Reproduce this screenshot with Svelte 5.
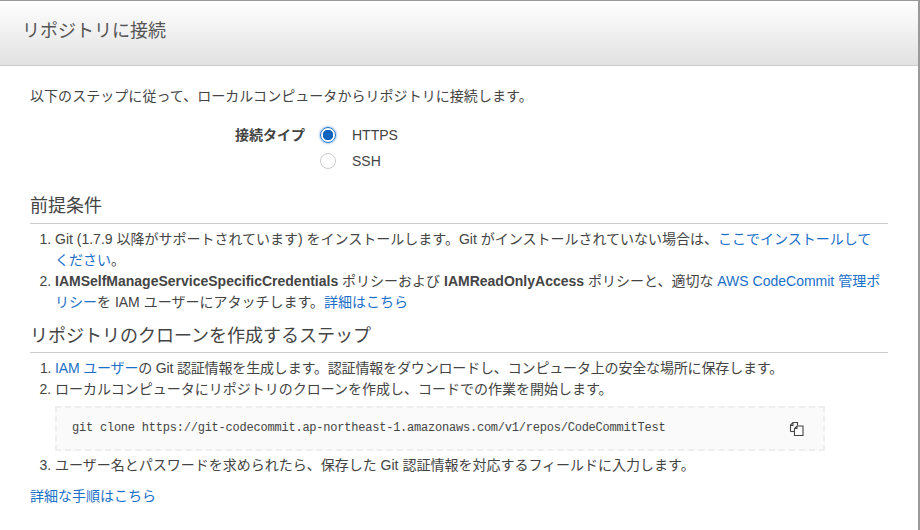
<script>
    let connType = $state("https");
    const cloneCmd = "git clone https://git-codecommit.ap-northeast-1.amazonaws.com/v1/repos/CodeCommitTest";
</script>

<div class="modal">
    <header class="modal-head">
        <h1>リポジトリに接続</h1>
    </header>
    <div class="modal-body">
        <p class="intro">以下のステップに従って、ローカルコンピュータからリポジトリに接続します。</p>

        <div class="conn">
            <span class="conn-label">接続タイプ</span>
            <div class="conn-options">
                <label class="radio">
                    <input type="radio" bind:group={connType} value="https" />
                    <span class="dot"></span>
                    HTTPS
                </label>
                <label class="radio">
                    <input type="radio" bind:group={connType} value="ssh" />
                    <span class="dot"></span>
                    SSH
                </label>
            </div>
        </div>

        <h2>前提条件</h2>
        <ol>
            <li>Git (1.7.9 以降がサポートされています) をインストールします。Git がインストールされていない場合は、<a href="#a">ここでインストールしてください</a>。</li>
            <li><b>IAMSelfManageServiceSpecificCredentials</b> ポリシーおよび <b>IAMReadOnlyAccess</b> ポリシーと、適切な <a href="#a">AWS CodeCommit 管理ポリシー</a>を IAM ユーザーにアタッチします。<a href="#a">詳細はこちら</a></li>
        </ol>

        <h2 class="second">リポジトリのクローンを作成するステップ</h2>
        <ol>
            <li class="tight"><a href="#a">IAM ユーザー</a>の Git 認証情報を生成します。認証情報をダウンロードし、コンピュータ上の安全な場所に保存します。</li>
            <li>
                ローカルコンピュータにリポジトリのクローンを作成し、コードでの作業を開始します。
                <div class="code">
                    <code>{cloneCmd}</code>
                    <svg class="copy" width="16" height="16" viewBox="0 0 16 16" fill="#fff" stroke="#444" stroke-width="1.1">
                        <path d="M1.5 10.5V4L4 1.5h4.5V4.5M1.5 4.5H4V1.5" fill="none" />
                        <path d="M1.5 10.5H5" fill="none" />
                        <path d="M5.5 14.5V7.5L8 5h6v9.5z" />
                        <path d="M5.5 7.5H8V5" fill="none" />
                    </svg>
                </div>
            </li>
            <li>ユーザー名とパスワードを求められたら、保存した Git 認証情報を対応するフィールドに入力します。</li>
        </ol>

        <a class="more" href="#a">詳細な手順はこちら</a>
    </div>
</div>

<style>
:global(body) {
    margin: 0;
    background: #fff;
}

.modal {
    box-sizing: border-box;
    width: 920px;
    height: 530px;
    border-top: 1px solid #9a9a9a;
    border-right: 2px solid #9a9a9a;
    font-family: "Liberation Sans", "Noto Sans CJK JP", sans-serif;
    font-size: 14px;
    line-height: 21px;
    color: #444;
    overflow: hidden;
}

.modal-head {
    box-sizing: border-box;
    height: 65px;
    padding: 18px 22px 0;
    background: linear-gradient(#fff, #e1e1e1);
    border-bottom: 1px solid #ccc;
}

h1 {
    margin: 0;
    font-size: 18px;
    line-height: 24px;
    font-weight: 400;
    color: #555;
}

.modal-body {
    padding: 20px 30px 0;
}

.intro {
    margin: 0;
    letter-spacing: 0.05px;
}

.conn {
    display: flex;
    margin-top: 15px;
    padding-left: 205px;
}

.conn-label {
    font-weight: 700;
    line-height: 26px;
    margin-right: 15px;
}

.conn-options {
    display: flex;
    flex-direction: column;
}

.radio {
    display: flex;
    align-items: center;
    height: 26px;
    color: #444;
}

.radio input {
    position: absolute;
    opacity: 0;
}

.dot {
    box-sizing: border-box;
    width: 16px;
    height: 16px;
    margin-right: 16px;
    border: 1px solid #ccc;
    border-radius: 50%;
    background: #fff;
}

.radio input:checked + .dot {
    border: 1px solid #1a6fc9;
    background: radial-gradient(circle, #0f65bd 0 5px, #fff 5.5px);
    box-shadow: 0 0 3px #5e9fe0;
}

h2 {
    margin: 20px 0 0;
    padding-bottom: 5px;
    border-bottom: 1px solid #ccc;
    font-size: 18px;
    line-height: 24px;
    font-weight: 400;
    color: #444;
}

h2.second {
    margin-top: 11px;
    padding-bottom: 4px;
}

ol {
    margin: 5px 0 0;
    padding: 0 0 0 25px;
    width: 827px;
}

.tight {
    letter-spacing: -0.16px;
}

a {
    color: #1a6fc9;
    text-decoration: none;
}

b {
    font-weight: 700;
}

.code {
    display: flex;
    align-items: center;
    justify-content: space-between;
    box-sizing: border-box;
    width: 770px;
    height: 45px;
    margin: 6px 0 4px;
    padding: 0 18px 0 15px;
    background: #fafafa;
    border: 2px dashed #eee;
}

code {
    font-family: "Liberation Mono", monospace;
    font-size: 12px;
    letter-spacing: -0.22px;
    color: #444;
}

.copy {
    flex: none;
}

.more {
    display: block;
    margin-top: 10px;
}
</style>
